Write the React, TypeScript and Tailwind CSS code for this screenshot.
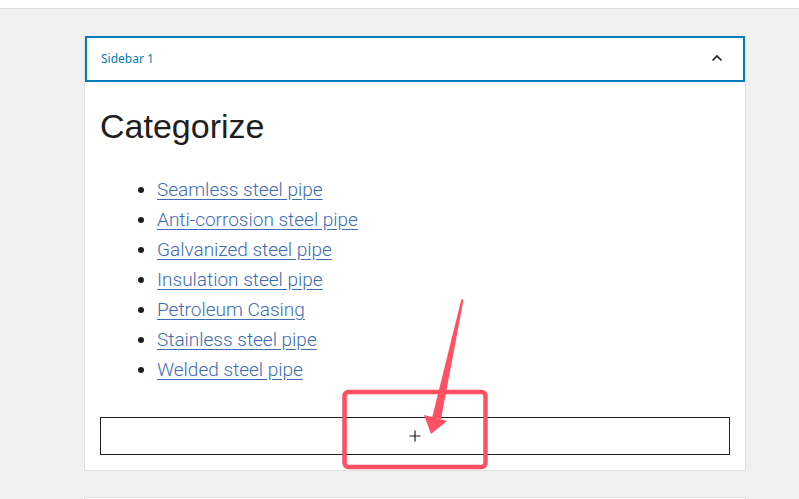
import React from 'react';

const links = [
  'Seamless steel pipe',
  'Anti-corrosion steel pipe',
  'Galvanized steel pipe',
  'Insulation steel pipe',
  'Petroleum Casing',
  'Stainless steel pipe',
  'Welded steel pipe',
];

export default function App() {
  return (
    <div className="relative w-[799px] h-[499px] overflow-hidden bg-[#f0f0f0]">
      {/* top toolbar edge */}
      <div className="h-[9px] bg-white border-b border-[#dcdcdc]" />

      {/* widget area panel */}
      <div className="ml-[84px] mt-[27px] w-[662px] bg-white border border-[#e0e0e0]">
        <div className="h-[46px] border-2 border-[#007cba] -mt-px flex items-center justify-between pl-[14px] pr-[20px]">
          <span className="text-[12px] text-[#007cba]" style={{ fontFamily: '"Noto Sans", sans-serif' }}>Sidebar 1</span>
          <svg width="12" height="8" viewBox="0 0 12 8" className="mt-[-3px]">
            <polyline points="1.5,6.5 6,2 10.5,6.5" fill="none" stroke="#1e1e1e" strokeWidth="1.6" />
          </svg>
        </div>

        <div className="px-[15px] pt-[24px] pb-[15px]">
          <h2 className="text-[34px] leading-[40px] text-[#1e1e1e]" style={{ fontFamily: '"Liberation Sans", Arial, sans-serif' }}>
            Categorize
          </h2>

          <ul className="list-disc pl-[57px] mt-[29px] text-[#1e1e1e]">
            {links.map((l) => (
              <li key={l} className="text-[19px] leading-[30px]" style={{ fontFamily: 'Roboto, sans-serif' }}>
                <a href="#" className="font-light text-[#3c6cb4] underline underline-offset-[3px] decoration-[#3c6cb4]">{l}</a>
              </li>
            ))}
          </ul>

          <button className="mt-[32px] w-full h-[38px] border border-[#1e1e1e] flex items-center justify-center bg-white">
            <svg width="12" height="12" viewBox="0 0 12 12">
              <path d="M6 0.5V11.5M0.5 6H11.5" stroke="#1e1e1e" strokeWidth="1.2" />
            </svg>
          </button>
        </div>
      </div>

      {/* next panel peeking in */}
      <div className="ml-[84px] mt-[26px] w-[662px] h-[20px] bg-white border border-[#e0e0e0]" />

      {/* red annotation overlay */}
      <svg className="absolute left-0 top-0 pointer-events-none" width="799" height="499" viewBox="0 0 799 499">
        <rect x="344.5" y="392" width="141" height="75" rx="4" fill="none" stroke="#ff4f62" strokeWidth="4.5" />
        <polygon points="461.5,299 463.5,300 441,419 432,418" fill="#ff4f62" />
        <polygon points="424,415 447,421 431,434" fill="#ff4f62" />
      </svg>
    </div>
  );
}
